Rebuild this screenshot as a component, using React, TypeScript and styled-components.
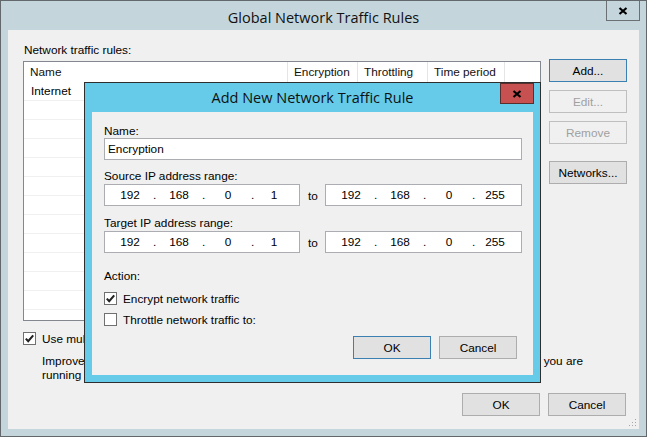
import React from 'react';
import styled, { createGlobalStyle } from 'styled-components';

const GlobalStyle = createGlobalStyle`
  html, body {
    margin: 0;
    padding: 0;
    background: #ffffff;
  }
  body {
    font-family: 'Liberation Sans', Arial, sans-serif;
    font-size: 11.8px;
    color: #000;
  }
  * {
    box-sizing: border-box;
  }
`;

const Screen = styled.div`
  position: relative;
  width: 647px;
  height: 437px;
  overflow: hidden;
`;

const Window = styled.div<{ $active?: boolean }>`
  display: flex;
  flex-direction: column;
  border: 1px solid ${(p) => (p.$active ? '#2e2e2e' : '#63686c')};
  background: ${(p) => (p.$active ? '#65cbe9' : '#c4d6dc')};
  padding: 0 7px 7px;
`;

const MainWindow = styled(Window)`
  width: 647px;
  height: 437px;
`;

const ModalWindow = styled(Window)`
  position: absolute;
  left: 84px;
  top: 82px;
  width: 457px;
  height: 301px;
`;

const TitleBar = styled.div`
  display: grid;
  grid-template-columns: 1fr auto 1fr;
  align-items: start;
  height: 29px;
`;

const Title = styled.div<{ $drop?: number }>`
  grid-column: 2;
  font-family: 'Open Sans', 'Noto Sans', sans-serif;
  font-size: 14.5px;
  line-height: 20px;
  padding-top: ${(p) => p.$drop ?? 5}px;
  color: #111;
  white-space: nowrap;
`;

const CloseButton = styled.div<{ $active?: boolean }>`
  grid-column: 3;
  justify-self: end;
  display: flex;
  align-items: center;
  justify-content: center;
  width: 34px;
  height: ${(p) => (p.$active ? 21 : 20)}px;
  margin-right: -1px;
  background: ${(p) => (p.$active ? '#c75050' : 'transparent')};
  border: 1px solid ${(p) => (p.$active ? '#5b2e2e' : '#6a7074')};
  border-top: ${(p) => (p.$active ? '1px solid #5b2e2e' : 'none')};
`;

const Body = styled.div`
  position: relative;
  flex: 1;
  display: flex;
  flex-direction: column;
  background: #f0f0f0;
  padding: 14px 13px 12px 15px;
`;

const ListArea = styled.div`
  display: grid;
  grid-template-columns: 518px 78px;
  grid-template-rows: 13px auto;
  column-gap: 8px;
`;

const Label = styled.div`
  line-height: 13px;
  height: 13px;
  white-space: nowrap;
`;

const ListLabel = styled(Label)`
  grid-column: 1;
  grid-row: 1;
  padding-left: 1px;
`;

const ListView = styled.div`
  grid-column: 1;
  grid-row: 2;
  margin-top: 4px;
  height: 260px;
  border: 1px solid #828790;
  background: #fff;
  overflow: hidden;
`;

const HeaderRow = styled.div`
  display: flex;
  height: 20px;
`;

const HeaderCell = styled.div<{ $w: number }>`
  width: ${(p) => p.$w}px;
  flex: none;
  padding-left: 6px;
  line-height: 20px;
  border-right: 1px solid #e5e5e5;
  white-space: nowrap;
  color: #111;
`;

const Row = styled.div`
  height: 19px;
  line-height: 18px;
  padding-left: 7px;
  border-bottom: 1px solid #f0f0f0;
`;

const ButtonColumn = styled.div`
  grid-column: 2;
  grid-row: 1 / span 2;
  display: flex;
  flex-direction: column;
  gap: 8px;
  padding-top: 15px;
`;

const Button = styled.div<{ $focused?: boolean; $disabled?: boolean; $gapBefore?: number }>`
  display: flex;
  align-items: center;
  justify-content: center;
  width: 78px;
  height: 23px;
  margin-top: ${(p) => p.$gapBefore ?? 0}px;
  background: ${(p) => (p.$disabled ? '#f0f0f0' : '#e1e1e1')};
  border: 1px solid
    ${(p) => (p.$focused ? '#3c7fb1' : p.$disabled ? '#bfbfbf' : '#adadad')};
  color: ${(p) => (p.$disabled ? '#a0a0a0' : '#000')};
  white-space: nowrap;
`;

const CheckRow = styled.div<{ $mt: number }>`
  display: flex;
  align-items: center;
  gap: 6px;
  height: 13px;
  margin-top: ${(p) => p.$mt}px;
  white-space: nowrap;
`;

const Box = styled.div`
  flex: none;
  width: 13px;
  height: 13px;
  border: 1px solid #707070;
  background: #fff;
  display: flex;
  align-items: center;
  justify-content: center;
`;

const Description = styled.div`
  margin: 9px 0 0 19px;
  width: 541px;
  line-height: 14px;
`;

const DescLine = styled.div`
  display: flex;
  justify-content: space-between;
  white-space: nowrap;
  overflow: hidden;
`;

const Footer = styled.div<{ $mt: number; $pr?: number }>`
  display: flex;
  justify-content: flex-end;
  gap: 8px;
  margin-top: ${(p) => p.$mt}px;
  padding-right: ${(p) => p.$pr ?? 0}px;
`;

const Grip = styled.svg`
  position: absolute;
  right: 2px;
  bottom: 2px;
`;

const ModalBody = styled.div`
  flex: 1;
  display: flex;
  flex-direction: column;
  background: #f0f0f0;
  padding: 13px 11px 0 12px;
`;

const TextBox = styled.div<{ $mt?: number }>`
  height: 22px;
  margin-top: ${(p) => p.$mt ?? 0}px;
  border: 1px solid #abadb3;
  background: #fff;
  padding-left: 3px;
  line-height: 20px;
`;

const IpRow = styled.div`
  display: grid;
  grid-template-columns: 196px 25px 1fr;
  align-items: center;
  margin-top: 1px;
`;

const IpBox = styled.div`
  display: grid;
  grid-template-columns: 46px 3px 46px 3px 46px 3px 40px;
  height: 22px;
  padding-left: 2px;
  border: 1px solid #abadb3;
  background: #fff;
  line-height: 20px;
  text-align: center;
`;

const To = styled.span`
  padding-left: 8px;
  padding-top: 1px;
`;

const Section = styled.div<{ $mt: number }>`
  margin-top: ${(p) => p.$mt}px;
`;

const CloseGlyph = () => (
  <svg width="10" height="8" viewBox="0 0 10 8">
    <path d="M1.5 1 L8.5 7 M8.5 1 L1.5 7" stroke="#000" strokeWidth="2.2" strokeLinecap="butt" />
  </svg>
);

const CheckMark = () => (
  <svg width="11" height="11" viewBox="0 0 11 11">
    <path d="M1.8 5.6 L4.2 8.2 L9.2 2.4" stroke="#222" strokeWidth="2.1" fill="none" />
  </svg>
);

const CheckBox = ({ checked }: { checked?: boolean }) => <Box>{checked && <CheckMark />}</Box>;

const IpField = ({ parts }: { parts: string[] }) => (
  <IpBox>
    {parts.map((part, i) => (
      <React.Fragment key={i}>
        {i > 0 && <span>.</span>}
        <span>{part}</span>
      </React.Fragment>
    ))}
  </IpBox>
);

const columns = [
  { name: 'Name', w: 264 },
  { name: 'Encryption', w: 70 },
  { name: 'Throttling', w: 70 },
  { name: 'Time period', w: 77 },
];

const rows = ['Internet', '', '', '', '', '', '', '', '', '', '', '', ''];

export default function App() {
  return (
    <>
      <GlobalStyle />
      <Screen>
        <MainWindow>
          <TitleBar>
            <Title $drop={7}>Global Network Traffic Rules</Title>
            <CloseButton>
              <CloseGlyph />
            </CloseButton>
          </TitleBar>
          <Body>
            <ListArea>
              <ListLabel>Network traffic rules:</ListLabel>
              <ListView>
                <HeaderRow>
                  {columns.map((c) => (
                    <HeaderCell key={c.name} $w={c.w}>
                      {c.name}
                    </HeaderCell>
                  ))}
                </HeaderRow>
                {rows.map((r, i) => (
                  <Row key={i}>{r}</Row>
                ))}
              </ListView>
              <ButtonColumn>
                <Button $focused>Add...</Button>
                <Button $disabled>Edit...</Button>
                <Button $disabled>Remove</Button>
                <Button $gapBefore={9}>Networks...</Button>
              </ButtonColumn>
            </ListArea>
            <CheckRow $mt={11}>
              <CheckBox checked />
              <span>Use multiple upload streams per job:</span>
            </CheckRow>
            <Description>
              <DescLine>
                <span>Improves performance of data transfer over high latency WAN links. Enable this option if</span>
                <span>you are</span>
              </DescLine>
              <DescLine>
                <span>running jobs between sites with slow network connections.</span>
              </DescLine>
            </Description>
            <Footer $mt={11}>
              <Button>OK</Button>
              <Button>Cancel</Button>
            </Footer>
            <Grip width="8" height="8" viewBox="0 0 8 8">
              <rect x="6" y="0" width="1" height="1" fill="#a0a8ac" />
              <rect x="3" y="3" width="1" height="1" fill="#a0a8ac" />
              <rect x="6" y="3" width="1" height="1" fill="#a0a8ac" />
              <rect x="0" y="6" width="1" height="1" fill="#a0a8ac" />
              <rect x="3" y="6" width="1" height="1" fill="#a0a8ac" />
              <rect x="6" y="6" width="1" height="1" fill="#a0a8ac" />
            </Grip>
          </Body>
        </MainWindow>

        <ModalWindow $active>
          <TitleBar>
            <Title $drop={5}>Add New Network Traffic Rule</Title>
            <CloseButton $active>
              <CloseGlyph />
            </CloseButton>
          </TitleBar>
          <ModalBody>
            <Label>Name:</Label>
            <TextBox>Encryption</TextBox>

            <Section $mt={10}>
              <Label>Source IP address range:</Label>
              <IpRow>
                <IpField parts={['192', '168', '0', '1']} />
                <To>to</To>
                <IpField parts={['192', '168', '0', '255']} />
              </IpRow>
            </Section>

            <Section $mt={11}>
              <Label>Target IP address range:</Label>
              <IpRow>
                <IpField parts={['192', '168', '0', '1']} />
                <To>to</To>
                <IpField parts={['192', '168', '0', '255']} />
              </IpRow>
            </Section>

            <Section $mt={17}>
              <Label>Action:</Label>
            </Section>
            <CheckRow $mt={9}>
              <CheckBox checked />
              <span>Encrypt network traffic</span>
            </CheckRow>
            <CheckRow $mt={8}>
              <CheckBox />
              <span>Throttle network traffic to:</span>
            </CheckRow>

            <Footer $mt={10} $pr={5}>
              <Button $focused>OK</Button>
              <Button>Cancel</Button>
            </Footer>
          </ModalBody>
        </ModalWindow>
      </Screen>
    </>
  );
}
